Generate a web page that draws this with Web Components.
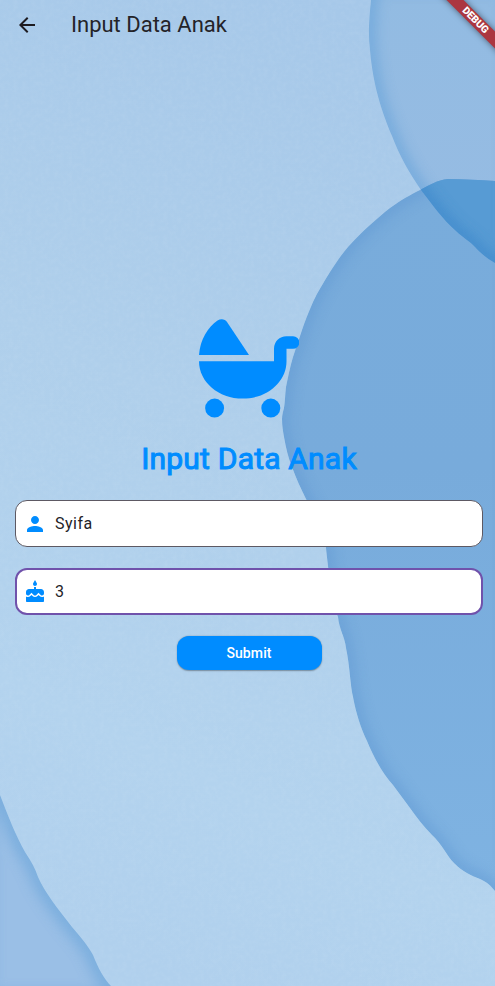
<!DOCTYPE html>
<html lang="id">
<head>
<meta charset="utf-8">
<title>Input Data Anak</title>
<style>
html,body{margin:0;height:100%;overflow:hidden}
body{font-family:Roboto,sans-serif;color:#242328}
</style>
</head>
<body>
<child-form-page></child-form-page>
<script>
const define = (name, html) => customElements.define(name, class extends HTMLElement {
  constructor() {
    super();
    this.attachShadow({mode: 'open'}).innerHTML = html;
  }
});

define('paper-backdrop', `
<style>:host{display:block;width:100%;height:100%}svg{display:block;width:100%;height:100%}</style>
<svg viewBox="0 0 495 986" preserveAspectRatio="none">
  <defs>
    <linearGradient id="bg" x1=".65" y1="0" x2=".4" y2="1"><stop stop-color="#a6c8e9"/><stop offset=".45" stop-color="#afcfeb"/><stop offset=".8" stop-color="#b3d3ee"/><stop offset="1" stop-color="#b0d0ed"/></linearGradient>
    <linearGradient id="big" x1="0" y1="0" x2="0" y2="1"><stop stop-color="#79acdb"/><stop offset=".4" stop-color="#78abdb"/><stop offset="1" stop-color="#7fb3e2"/></linearGradient>
    <linearGradient id="round" x1="0" y1="0" x2="0" y2="1"><stop stop-color="#92bbe2"/><stop offset="1" stop-color="#97bce3"/></linearGradient>
    <path id="pBig" d="M510 182 L495 181 C480 180 465 179 448 179 C437 180 430 185 421 189.500 C410 195 401 200 390 208 C383 213 377 219 370 225 C362 232 355 239 348 247 C341 255 336 263 330 272 C324 282 318 291 313 302 C309 311 305 321 302 330 C299 339 296 348 293 357 C290 367 288 377 286 387 C285 395 285 402 284 408 C283 412 282 415 282 419 C282 426 283 431 284 437 C286 448 288 457 292 467 C296 478 301 489 306 499 C314 513 323 529 326 548 C328 568 332 600 338 617 C339 629 345 637 346 648 C350 667 350 684 353 697 C356 713 361 729 367 741 C374 758 383 774 393 785 L410 808 C417 818 424 827 432 835 C442 844 447 856 454 863 C463 872 472 876 480 879 C487 882 491 886 495 891 L510 900Z"/>
    <path id="pRound" d="M371 -15 L371 0 C369 20 368 34 370 50 C373 86 382 112 392 136 C399 155 410 174 421 190 C431 203 443 220 456 231 C463 238 470 241 475 247 C480 253 488 259 495 263 L510 270 V-15Z"/>
    <path id="pCorner" d="M-15 760 L0 795 C8 816 16 836 25 852 C31 861 35 868 38 877 C45 893 58 909 72 927 C80 936 88 946 93 955 C98 968 104 979 111 986 L120 1000 H-15Z"/>
    <clipPath id="cBig"><use href="#pBig"/></clipPath>
    <clipPath id="cRound"><use href="#pRound"/></clipPath>
    <clipPath id="cCorner"><use href="#pCorner"/></clipPath>
    <filter id="b" x="-20%" y="-20%" width="140%" height="140%"><feGaussianBlur stdDeviation="6.5"/></filter>
    <filter id="grain" x="0" y="0" width="100%" height="100%"><feTurbulence type="fractalNoise" baseFrequency=".22" numOctaves="2" seed="4"/><feColorMatrix values="0 0 0 0 1  0 0 0 0 1  0 0 0 0 1  .45 0 0 0 -.16"/></filter>
  </defs>
  <rect width="495" height="986" fill="url(#bg)"/>
  <rect width="495" height="986" filter="url(#grain)" opacity=".22"/>
  <g clip-path="url(#cRound)"><use href="#pRound" fill="url(#round)"/><use href="#pRound" fill="none" stroke="#5f9fd8" stroke-width="12" filter="url(#b)" opacity=".65"/></g>
  <g clip-path="url(#cBig)"><use href="#pBig" fill="url(#big)"/><use href="#pBig" fill="none" stroke="#5f97d2" stroke-width="10" filter="url(#b)" opacity=".65"/>
    <g clip-path="url(#cRound)"><use href="#pRound" fill="#579bd4"/><use href="#pRound" fill="none" stroke="#3d88cb" stroke-width="12" filter="url(#b)" opacity=".8"/></g>
  </g>
  <g clip-path="url(#cCorner)"><use href="#pCorner" fill="#9abfe6"/><use href="#pCorner" fill="none" stroke="#6ea7da" stroke-width="15" filter="url(#b)" opacity=".75"/></g>
</svg>`);

define('top-bar', `
<style>
:host{display:flex;align-items:center;height:49px;padding-left:15px;box-sizing:border-box}
svg{width:24px;height:24px;fill:#1d1b20}
h1{margin:0 0 0 32px;font:400 22px/28px Roboto,sans-serif}
</style>
<svg viewBox="0 0 24 24"><path d="M20 11H7.83l5.59-5.59L12 4l-8 8 8 8 1.41-1.41L7.83 13H20v-2z"/></svg>
<h1><slot></slot></h1>`);

define('stroller-icon', `
<style>:host{display:block;width:100px;height:99px}svg{display:block}</style>
<svg width="100" height="99" viewBox="199 319 100 99" fill="#008cff">
<path d="M199 355C200 340 208 327 217.5 320.6C221 318.3 225 319 227 322L249 355Z"/>
<path d="M199 361.2H274V348.5C274 341.5 279.5 336.2 286.5 336.2H293A6.3 6.3 0 0 1 293 348.8H286.5V361.2C286.5 382 267 398.6 242.8 398.6S199 382 199 361.2Z"/>
<circle cx="214.6" cy="408.1" r="9.5"/><circle cx="270.8" cy="408.1" r="9.5"/></svg>`);

define('text-field', `
<style>
:host{display:flex;align-items:center;height:47px;box-sizing:border-box;border:1px solid #5d5963;border-radius:12px;background:#fff;padding-left:9px;font-size:16px;line-height:24px;letter-spacing:.5px}
:host([focused]){border:2px solid #7052ab;padding-left:8px}
.icon{width:20px;height:24px;display:flex;justify-content:center;margin-right:10px}
::slotted(svg){width:24px;height:24px;flex:none;fill:#008cff}
</style>
<span class="icon"><slot name="icon"></slot></span><span><slot></slot></span>`);

define('submit-button', `
<style>
:host{display:flex;align-items:center;justify-content:center;width:145px;height:34px;border-radius:12px;background:#008cff;color:#fff;font:500 14px/20px Roboto,sans-serif;letter-spacing:.1px;box-shadow:0 .5px 1.5px rgba(0,0,0,.35)}
</style><slot></slot>`);

define('debug-ribbon', `
<style>
:host{position:absolute;top:0;right:0;width:60px;height:60px;overflow:hidden;pointer-events:none}
div{position:absolute;width:100px;height:12px;left:-9px;top:15px;transform:rotate(45deg);background:#ab3640;box-shadow:0 0 6px rgba(0,0,0,.5);color:#fff;font:900 10.2px/12px Roboto,sans-serif;text-align:center;text-indent:-2px}
</style><div><slot></slot></div>`);

define('child-form-page', `
<style>
:host{display:grid;width:495px;height:986px;position:relative;overflow:hidden}
:host>*{grid-area:1/1}
main{display:flex;flex-direction:column;position:relative;min-width:0}
form{display:flex;flex-direction:column;padding:270px 12px 0 15px}
stroller-icon{align-self:center}
h2{margin:22px 0 22px 0;text-align:center;font:400 30px/38px Roboto,sans-serif;letter-spacing:.2px;-webkit-text-stroke:1px #008cff;color:#008cff}
text-field+text-field{margin-top:21px}
submit-button{align-self:center;margin-top:21px}
</style>
<paper-backdrop></paper-backdrop>
<main>
<top-bar>Input Data Anak</top-bar>
<form>
<stroller-icon></stroller-icon>
<h2>Input Data Anak</h2>
<text-field><svg slot="icon" viewBox="0 0 24 24"><path d="M12 12c2.21 0 4-1.79 4-4s-1.79-4-4-4-4 1.79-4 4 1.79 4 4 4zm0 2c-2.67 0-8 1.34-8 4v2h16v-2c0-2.66-5.33-4-8-4z"/></svg>Syifa</text-field>
<text-field focused><svg slot="icon" viewBox="0 0 24 24"><path d="M12 6c1.11 0 2-.9 2-2 0-.38-.1-.73-.29-1.03L12 0l-1.71 2.97c-.19.3-.29.65-.29 1.03 0 1.1.9 2 2 2zm4.6 9.99l-1.07-1.07-1.08 1.07c-1.3 1.3-3.58 1.31-4.89 0l-1.07-1.07-1.09 1.07C6.75 16.64 5.88 17 4.96 17c-.73 0-1.4-.23-1.96-.61V21c0 .55.45 1 1 1h16c.55 0 1-.45 1-1v-4.61c-.56.38-1.23.61-1.96.61-.92 0-1.79-.36-2.44-1.01zM18 9h-5V7h-2v2H6c-1.66 0-3 1.34-3 3v1.54c0 1.08.88 1.96 1.96 1.96.52 0 1.02-.2 1.38-.57l2.14-2.13 2.13 2.13c.74.74 2.03.74 2.77 0l2.14-2.13 2.13 2.13c.37.37.86.57 1.38.57 1.08 0 1.96-.88 1.96-1.96V12C21 10.34 19.66 9 18 9z"/></svg>3</text-field>
<submit-button>Submit</submit-button>
</form>
</main>
<debug-ribbon>DEBUG</debug-ribbon>`);
</script>
</body>
</html>
